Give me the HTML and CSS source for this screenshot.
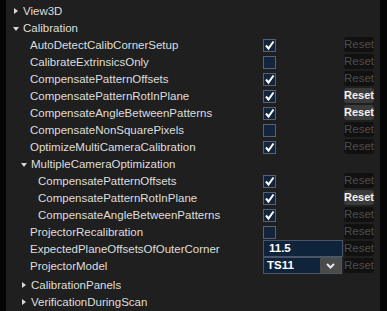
FILE: index.html
```html
<!DOCTYPE html>
<html lang="en">
<head>
  <meta charset="UTF-8" />
  <title>Calibration settings</title>
  <link rel="stylesheet" href="styles.css">
</head>
<body>
  <div class="panel">
    <div class="row lvl0"><span class="tog closed"></span><span class="label">View3D</span></div>
    <div class="row lvl0"><span class="tog open"></span><span class="label">Calibration</span></div>

    <div class="row lvl1"><span class="label">AutoDetectCalibCornerSetup</span><span class="ctl"><span class="check on"></span></span><button class="reset">Reset</button></div>
    <div class="row lvl1"><span class="label">CalibrateExtrinsicsOnly</span><span class="ctl"><span class="check"></span></span><button class="reset">Reset</button></div>
    <div class="row lvl1"><span class="label">CompensatePatternOffsets</span><span class="ctl"><span class="check on"></span></span><button class="reset">Reset</button></div>
    <div class="row lvl1"><span class="label">CompensatePatternRotInPlane</span><span class="ctl"><span class="check on"></span></span><button class="reset active">Reset</button></div>
    <div class="row lvl1"><span class="label">CompensateAngleBetweenPatterns</span><span class="ctl"><span class="check on"></span></span><button class="reset active">Reset</button></div>
    <div class="row lvl1"><span class="label">CompensateNonSquarePixels</span><span class="ctl"><span class="check"></span></span><button class="reset">Reset</button></div>
    <div class="row lvl1"><span class="label">OptimizeMultiCameraCalibration</span><span class="ctl"><span class="check on"></span></span><button class="reset">Reset</button></div>

    <div class="row lvl1 group"><span class="tog open"></span><span class="label">MultipleCameraOptimization</span></div>
    <div class="row lvl2"><span class="label">CompensatePatternOffsets</span><span class="ctl"><span class="check on"></span></span><button class="reset">Reset</button></div>
    <div class="row lvl2"><span class="label">CompensatePatternRotInPlane</span><span class="ctl"><span class="check on"></span></span><button class="reset active">Reset</button></div>
    <div class="row lvl2"><span class="label">CompensateAngleBetweenPatterns</span><span class="ctl"><span class="check on"></span></span><button class="reset">Reset</button></div>

    <div class="row lvl1"><span class="label">ProjectorRecalibration</span><span class="ctl"><span class="check"></span></span><button class="reset">Reset</button></div>
    <div class="row lvl1"><span class="label">ExpectedPlaneOffsetsOfOuterCorner</span><span class="ctl"><span class="field">11.5</span></span><button class="reset">Reset</button></div>
    <div class="row lvl1"><span class="label">ProjectorModel</span><span class="ctl"><span class="select"><span class="value">TS11</span><span class="arrow"><svg width="9" height="6" viewBox="0 0 9 6"><polyline points="1,1 4.5,4.5 8,1" fill="none" stroke="#e8e8e8" stroke-width="2"/></svg></span></span></span><button class="reset">Reset</button></div>

    <div class="row lvl1 group sub"><span class="tog closed"></span><span class="label">CalibrationPanels</span></div>
    <div class="row lvl1 group"><span class="tog closed"></span><span class="label">VerificationDuringScan</span></div>
  </div>

  <script>
    document.querySelectorAll('.check.on').forEach(c => {
      c.innerHTML = '<svg width="11" height="11" viewBox="0 0 11 11"><polyline points="2,5.5 4.5,8.5 9.5,1.5" fill="none" stroke="#ffffff" stroke-width="2"/></svg>';
    });
  </script>
</body>
</html>
```

FILE: styles.css
```css
body {
  margin: 0;
  background-color: #050505;
  font-family: "Liberation Sans", Arial, sans-serif;
  font-size: 11.5px;
  color: #dedede;
}

.panel {
  margin-left: 6px;
  width: 374px;
  height: 311px;
  padding-top: 2px;
  box-sizing: border-box;
  background-color: #1f1f1f;
}

.row {
  display: grid;
  grid-template-columns: 1fr 80px 30px;
  column-gap: 1px;
  align-items: center;
  height: 17px;
  padding-right: 6px;
}

.row.lvl0,
.row.group {
  display: flex;
}

.lvl0 { padding-left: 6px; }
.lvl1 { padding-left: 24px; }
.lvl2 { padding-left: 32px; }
.row.group { padding-left: 14px; }
.row.sub { margin-top: 2px; }

.label {
  white-space: nowrap;
  overflow: hidden;
}

.tog {
  display: flex;
  align-items: center;
  justify-content: center;
  width: 8px;
  height: 10px;
  margin-right: 2px;
}

.tog.closed::before {
  content: "";
  border-left: 4px solid #d8d8d8;
  border-top: 3.5px solid transparent;
  border-bottom: 3.5px solid transparent;
}

.tog.open::before {
  content: "";
  margin-top: 2px;
  border-top: 4px solid #d8d8d8;
  border-left: 3.5px solid transparent;
  border-right: 3.5px solid transparent;
}

.ctl {
  display: flex;
  align-items: center;
  height: 17px;
}

.check {
  display: flex;
  align-items: center;
  justify-content: center;
  width: 11px;
  height: 11px;
  margin-top: 1px;
  border: 1px solid #566172;
  background-color: #12253d;
}

.field {
  width: 80px;
  height: 17px;
  line-height: 15px;
  padding-left: 5px;
  box-sizing: border-box;
  border: 1px solid #4a5565;
  background-color: #0f233b;
  color: #ffffff;
  font-weight: bold;
}

.select {
  display: flex;
  width: 79px;
  height: 17px;
  box-sizing: border-box;
  border: 1px solid #4a5565;
  background-color: #0f233b;
  color: #ffffff;
  font-weight: bold;
}

.select .value {
  flex: 1;
  padding-left: 3px;
  line-height: 15px;
}

.select .arrow {
  display: flex;
  align-items: center;
  justify-content: center;
  width: 21px;
  background-color: #4b4b4b;
}

.reset {
  width: 30px;
  height: 15px;
  padding: 0;
  border: none;
  border-radius: 3px;
  background-color: #111111;
  color: #4d4d4d;
  font-family: "Liberation Sans", Arial, sans-serif;
  font-size: 11.5px;
  line-height: 15px;
  text-align: center;
  overflow: visible;
  white-space: nowrap;
}

.reset.active {
  background-color: #3b3b3b;
  color: #f2f2f2;
  font-weight: bold;
  font-size: 11px;
}
```
